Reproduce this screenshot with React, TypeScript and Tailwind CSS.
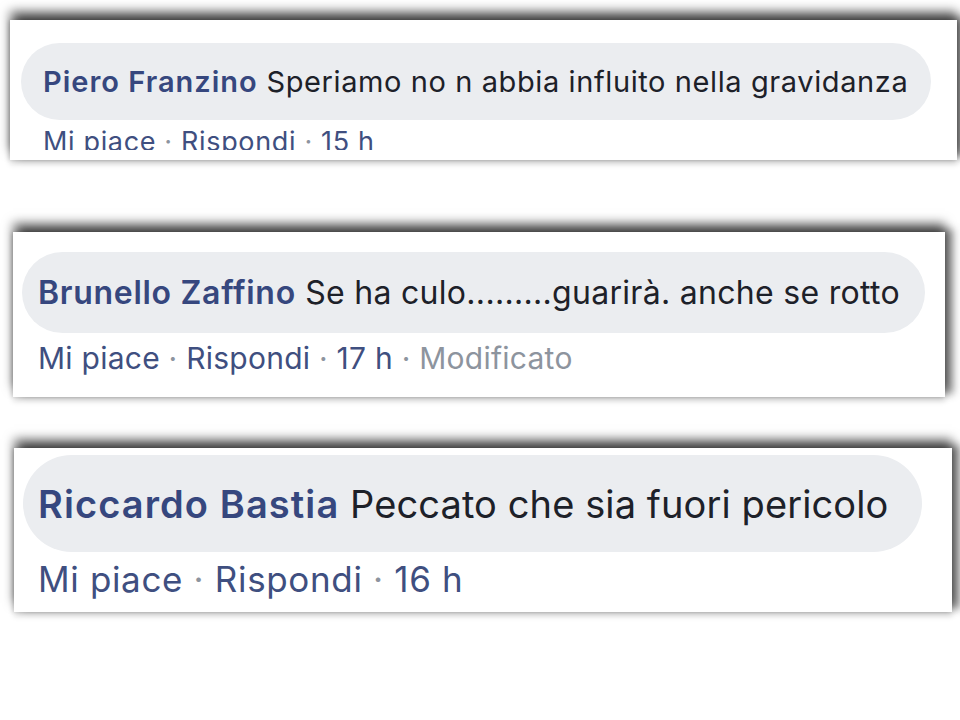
import React from "react";

const SHADOW =
  "shadow-[0_-9px_10px_rgba(0,0,0,0.55),8px_-3px_8px_rgba(0,0,0,0.45),0_4px_6px_rgba(0,0,0,0.14),-2px_0_4px_rgba(0,0,0,0.12)]";

function Dot() {
  return <span className="text-[#8d949e]"> · </span>;
}

export default function App() {
  return (
    <div
      className="w-[960px] h-[720px] bg-white overflow-hidden pt-[20px]"
      style={{ fontFamily: "Inter, 'Liberation Sans', sans-serif" }}
    >
      {/* Card 1 */}
      <div className={`ml-[10px] w-[947px] h-[140px] bg-white ${SHADOW}`}>
        <div className="h-[130px] overflow-hidden pt-[23px] pl-[11px]">
          <div className="w-[910px] h-[77px] rounded-full bg-[#ebedf0] flex items-center pl-[22px] whitespace-nowrap text-[29px] leading-[29px]">
            <span className="font-semibold text-[#36477e] tracking-[1px]">Piero Franzino</span>
            <span className="text-[#1d2129] tracking-[0.6px]">&nbsp;Speriamo no n abbia influito nella gravidanza</span>
          </div>
          <div className="mt-[8px] ml-[22px] whitespace-nowrap text-[27px] leading-[27px] tracking-[0.65px] text-[#3f4f80]">
            Mi piace<Dot />Rispondi<Dot />15 h
          </div>
        </div>
      </div>

      {/* Card 2 */}
      <div className={`mt-[72px] ml-[13px] w-[932px] h-[165px] bg-white ${SHADOW}`}>
        <div className="pt-[20px] pl-[9px]">
          <div className="w-[903px] h-[81px] rounded-full bg-[#ebedf0] flex items-center pl-[16px] whitespace-nowrap text-[32px] leading-[32px]">
            <span className="font-semibold text-[#36477e] tracking-[0.7px]">Brunello Zaffino</span>
            <span className="text-[#1d2129] tracking-[0.3px]">&nbsp;Se ha culo.........guarirà. anche se rotto</span>
          </div>
          <div className="mt-[10px] ml-[16px] whitespace-nowrap text-[30px] leading-[30px] tracking-[0.25px] text-[#3f4f80]">
            Mi piace<Dot />Rispondi<Dot />17 h<Dot />
            <span className="text-[#8d949e]">Modificato</span>
          </div>
        </div>
      </div>

      {/* Card 3 */}
      <div className={`mt-[51px] ml-[14px] w-[938px] h-[164px] bg-white ${SHADOW}`}>
        <div className="pt-[7px] pl-[9px]">
          <div className="w-[899px] h-[97px] rounded-full bg-[#ebedf0] flex items-center pl-[15px] whitespace-nowrap text-[38px] leading-[38px]">
            <span className="font-semibold text-[#36477e] tracking-[1.1px]">Riccardo Bastia</span>
            <span className="text-[#1d2129] tracking-[0.1px]">&nbsp;Peccato che sia fuori pericolo</span>
          </div>
          <div className="mt-[10px] ml-[15px] whitespace-nowrap text-[35px] leading-[35px] tracking-[0.65px] text-[#3f4f80]">
            Mi piace<Dot />Rispondi<Dot />16 h
          </div>
        </div>
      </div>
    </div>
  );
}
